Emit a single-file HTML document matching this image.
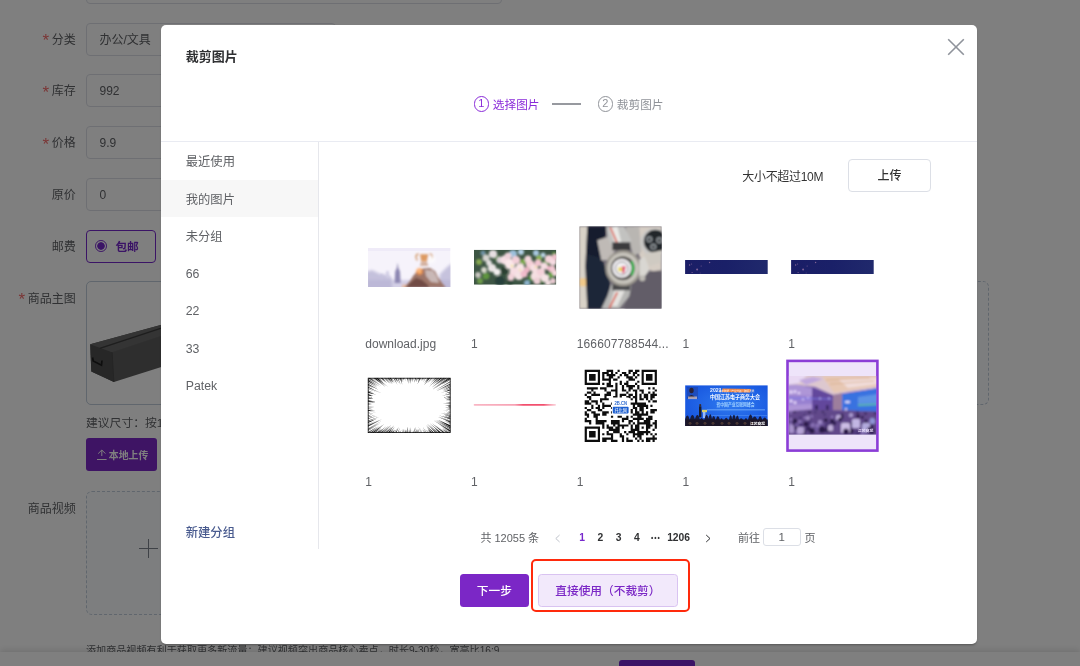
<!DOCTYPE html>
<html lang="zh-CN">
<head>
<meta charset="utf-8">
<title>裁剪图片</title>
<style>
*{box-sizing:border-box;margin:0;padding:0}
html,body{width:1080px;height:666px;overflow:hidden;background:#fff}
body{position:relative;font-family:"Liberation Sans","Noto Sans CJK SC",sans-serif;font-size:12px;color:#606266}
.abs{position:absolute}
/* ---------- underlying page ---------- */
#page{position:absolute;left:0;top:0;width:1080px;height:666px;will-change:transform}
.lbl{position:absolute;left:0;width:75.8px;text-align:right;height:33px;line-height:34.6px;font-size:12px;color:#606266;white-space:nowrap}
.lbl i{font-style:normal;color:#f56c6c;margin-right:2.6px;font-size:17px;line-height:10px;display:inline-block;position:relative;top:2.6px}
.inp{position:absolute;left:86px;width:250px;height:33px;border:1px solid #dcdfe6;border-radius:4px;line-height:33.6px;padding-left:12.5px;color:#606266;font-size:12px;background:#fff;overflow:hidden}
.radio{position:absolute;left:86px;top:230px;width:70px;height:33px;border:1px solid #7728cc;border-radius:4px;color:#7728cc;font-weight:bold;line-height:31.2px;padding-left:28.4px;font-size:11.7px}
.radio:before{content:"";position:absolute;left:8px;top:9.2px;width:9.8px;height:9.8px;border-radius:50%;border:1px solid #7728cc;background:radial-gradient(circle,#7728cc 0,#7728cc 3.4px,#fff 4.1px)}
.mainimg{position:absolute;left:86px;top:281px;width:903px;height:124px;border:1px dashed #c0ccda;border-radius:6px;background:#fbfdff}
.mainimg .pic{position:absolute;left:-1px;top:-1px;width:124px;height:124px;border:1px solid #c0ccda;border-radius:5px;background:#fff;overflow:hidden}
.tip{position:absolute;left:86px;white-space:nowrap;color:#606266;font-size:11.8px}
.pbtn{position:absolute;background:#7728cc;color:#fff;border-radius:3px;font-weight:500;font-size:11px;text-align:center;white-space:nowrap}
.video{position:absolute;left:86px;top:491px;width:124px;height:124px;border:1px dashed #c0ccda;border-radius:6px;background:#fbfdff}
.video:before{content:"";position:absolute;left:52.2px;top:56px;width:18.4px;height:1.3px;background:#7e858f}
.video:after{content:"";position:absolute;left:60.8px;top:47.4px;width:1.3px;height:18.4px;background:#7e858f}
#bar{position:absolute;left:0;top:652px;width:1080px;height:14px;background:#fff;box-shadow:0 -2px 6px rgba(0,0,0,.12)}
#mask{position:absolute;left:0;top:0;width:1080px;height:666px;background:rgba(0,0,0,.5)}
/* ---------- modal ---------- */
#modal{will-change:transform;position:absolute;left:161px;top:25px;width:816px;height:619.4px;background:#fff;border-radius:5px;box-shadow:0 2px 2.5px -1px rgba(0,0,0,.35);color:#606266}
#mi{position:absolute;left:-.25px;top:.5px;width:816px;height:619px}
#modal .title{position:absolute;left:25px;top:21px;font-size:13px;font-weight:bold;color:#303133;line-height:20px}
#modal .hr{position:absolute;left:0;top:115.5px;width:816px;height:1px;background:#e9ebf2}
#modal .vr{position:absolute;left:157px;top:116px;width:1px;height:407px;background:#e6e7ec}
.close{position:absolute;left:786px;top:12.4px}
.step{position:absolute;top:68px;height:20px;line-height:22.4px;font-size:11.7px;white-space:nowrap}
.num{position:absolute;width:15.4px;height:15.4px;border-radius:50%;border:1.2px solid;font-size:11px;line-height:13.2px;text-align:center}
.side{position:absolute;left:0;width:157px;height:37.5px;line-height:39.5px;padding-left:25px;font-size:12.3px;color:#606266;white-space:nowrap}
.side.on{background:#f7f7f7}
.cap{position:absolute;font-size:12px;color:#606266;white-space:nowrap;line-height:16px}
.pg{position:absolute;top:502.2px;height:18px;line-height:20px;font-size:11px;white-space:nowrap;color:#606266}
.pn{position:absolute;top:502.2px;width:24px;height:18px;line-height:19.4px;text-align:center;font-size:10.3px;font-weight:bold;color:#303133;white-space:nowrap}
</style>
</head>
<body>
<div id="page">
  <div class="inp" style="top:-29.3px;width:416px"></div>

  <div class="lbl" style="top:22.5px"><i>*</i>分类</div>
  <div class="inp" style="top:22.5px">办公/文具</div>
  <div class="lbl" style="top:74.3px"><i>*</i>库存</div>
  <div class="inp" style="top:74.3px">992</div>
  <div class="lbl" style="top:126.2px"><i>*</i>价格</div>
  <div class="inp" style="top:126.2px">9.9</div>
  <div class="lbl" style="top:177.8px">原价</div>
  <div class="inp" style="top:177.8px">0</div>
  <div class="lbl" style="top:230px">邮费</div>
  <div class="radio">包邮</div>

  <div class="lbl" style="top:281.5px"><i>*</i>商品主图</div>
  <div class="mainimg">
    <div class="pic">
      <svg width="124" height="124" viewBox="86 281 124 124" style="position:absolute;left:-1px;top:-1px">
        <defs><filter id="pb" x="-10%" y="-10%" width="120%" height="120%"><feGaussianBlur stdDeviation="0.5"/></filter></defs>
        <g filter="url(#pb)">
        <polygon points="90.2,344.3 160.6,325 215,312 215,350 113.9,382 91.3,371.4" fill="#5d5d5d"/>
        <polygon points="90.2,344.3 112.2,352.2 113.9,382 91.3,371.4" fill="#4f4f4f"/>
        <polygon points="90.2,344.3 160.6,325 215,312 215,318 112.2,352.2" fill="#686868"/>
        <path d="M99.8 348.4 L160.6 328.4 L215 312" stroke="#3c3c3c" stroke-width="1.3" fill="none"/>
        <path d="M112.2 352.2 L113.9 382" stroke="#474747" stroke-width=".8" fill="none"/>
        <path d="M92.6 357.5 L93.2 361 L101.5 365.2 L102 360.5" stroke="#1c1c1c" stroke-width="1.7" fill="none"/>
        </g>
      </svg>
    </div>
  </div>
  <div class="tip" style="top:413.7px;line-height:18px">建议尺寸：按1:1的比例上传，800*800以上</div>
  <div class="pbtn" style="left:86px;top:438px;width:71.2px;height:33px;line-height:36.4px;font-size:9.9px;font-weight:bold;background:#7c28c8;text-align:left;padding-left:22.8px"><svg width="12" height="12" viewBox="0 0 12 12" style="position:absolute;left:9.6px;top:11px"><path d="M1 10.5 H10.6 M5.8 7 V1.2 M2.2 4.6 L5.8 1 L9.4 4.6" stroke="#fff" stroke-width="1" fill="none"/></svg>本地上传</div>

  <div class="lbl" style="top:491.5px">商品视频</div>
  <div class="video"></div>
  <div class="tip" style="top:643.6px;line-height:14px;font-size:10.1px">添加商品视频有利于获取更多新流量；建议视频突出商品核心卖点，时长9-30秒，宽高比16:9</div>

  <div id="bar"></div>
  <div class="pbtn" style="left:619px;top:660px;width:76px;height:33px;line-height:33px;font-size:12px">保存</div>
</div>
<div id="mask"></div>

<div id="modal">
<div id="mi">
  <div class="title">裁剪图片</div>
  <svg class="close" width="18" height="18" viewBox="0 0 18 18"><path d="M1.2 1.2 L16.8 16.8 M16.8 1.2 L1.2 16.8" stroke="#8f939b" stroke-width="1.6" fill="none"/></svg>

  <!-- steps -->
  <div class="num" style="left:312.8px;top:70.8px;color:#8a2bd9;border-color:#8a2bd9">1</div>
  <div class="step" style="left:332px;color:#8a2bd9">选择图片</div>
  <div class="abs" style="left:391.2px;top:77.5px;width:29.3px;height:1.5px;background:#97999f"></div>
  <div class="num" style="left:436.8px;top:70.8px;color:#909399;border-color:#909399">2</div>
  <div class="step" style="left:456px;color:#909399">裁剪图片</div>

  <div class="hr"></div>
  <div class="vr"></div>

  <!-- sidebar -->
  <div class="side" style="top:117.9px">最近使用</div>
  <div class="side on" style="top:154.4px;line-height:41px">我的图片</div>
  <div class="side" style="top:192.9px">未分组</div>
  <div class="side" style="top:229.4px">66</div>
  <div class="side" style="top:266.9px">22</div>
  <div class="side" style="top:304.4px">33</div>
  <div class="side" style="top:341.9px">Patek</div>
  <div class="side" style="top:488.4px;color:#485a8e;font-weight:500">新建分组</div>

  <!-- upload bar -->
  <div class="cap" style="left:581.5px;top:143.2px;color:#333;letter-spacing:-.3px">大小不超过10M</div>
  <div class="abs" style="left:687.3px;top:133.7px;width:83px;height:33px;border:1px solid #dcdfe6;border-radius:4px;text-align:center;line-height:32.5px;font-weight:500;color:#333;font-size:12px">上传</div>

  <!-- grid placeholder -->
<svg id="grid" width="816" height="619" viewBox="161 25 816 619" style="position:absolute;left:.25px;top:-.5px;font-family:'Liberation Sans','Noto Sans CJK SC',sans-serif">
<defs>
<filter id="b1" x="-20%" y="-20%" width="140%" height="140%"><feGaussianBlur stdDeviation="0.9"/></filter>
<filter id="b2" x="-20%" y="-20%" width="140%" height="140%"><feGaussianBlur stdDeviation="1.6"/></filter>
<filter id="b05" x="-20%" y="-20%" width="140%" height="140%"><feGaussianBlur stdDeviation="0.45"/></filter>
<linearGradient id="g1" x1="0" y1="0" x2="0" y2="1"><stop offset="0" stop-color="#efe9f8"/><stop offset=".45" stop-color="#f8f5fc"/><stop offset=".75" stop-color="#d9d4ea"/><stop offset="1" stop-color="#b4b0d2"/></linearGradient>
<radialGradient id="glow"><stop offset="0" stop-color="#ffd9a0"/><stop offset=".4" stop-color="#ff9a4a" stop-opacity=".9"/><stop offset="1" stop-color="#ff9a4a" stop-opacity="0"/></radialGradient>
<radialGradient id="wglow"><stop offset="0" stop-color="#fff"/><stop offset="1" stop-color="#fff" stop-opacity="0"/></radialGradient>
<linearGradient id="navy" x1="0" y1="0" x2="1" y2="0"><stop offset="0" stop-color="#1b1e66"/><stop offset=".5" stop-color="#1a2068"/><stop offset="1" stop-color="#20296c"/></linearGradient>
<linearGradient id="redl" x1="0" y1="0" x2="1" y2="0"><stop offset="0" stop-color="#f9b6c4"/><stop offset=".5" stop-color="#f7a2b4"/><stop offset=".6" stop-color="#f2506e"/><stop offset=".85" stop-color="#f2506e"/><stop offset="1" stop-color="#f9b6c4" stop-opacity=".6"/></linearGradient>
<radialGradient id="blu" cx=".55" cy=".45" r=".7"><stop offset="0" stop-color="#2f7bf0"/><stop offset="1" stop-color="#1450dc"/></radialGradient>
<clipPath id="c1"><rect x="368" y="248" width="82.5" height="39"/></clipPath>
<clipPath id="c2"><rect x="474" y="249.7" width="82.3" height="35"/></clipPath>
<clipPath id="c3"><rect x="579.3" y="226.3" width="82.4" height="82.5"/></clipPath>
<clipPath id="c9"><rect x="685.1" y="385.2" width="82.7" height="40.8"/></clipPath>
<clipPath id="c10"><rect x="788.9" y="376" width="87.3" height="58.6"/></clipPath>
</defs>
<g clip-path="url(#c1)">
<rect x="368" y="248" width="82.5" height="39" fill="#f6f3fb"/>
<rect x="368" y="248" width="82.5" height="3" fill="#eee9f7" opacity=".8"/>
<g filter="url(#b2)">
<rect x="366" y="280" width="86" height="10" fill="#d3cfe6"/>
<path d="M366 272 L372 270 L380 274 L388 275 L392 278 L392 290 L366 290Z" fill="#b4b0d2" opacity=".75"/>
<path d="M440 274 L446 268 L452 263 L452 290 L438 290Z" fill="#b6b2d3" opacity=".75"/>
</g>
<g filter="url(#b1)">
<path d="M397.6 262.5 L398.4 268 L400 271.5 L400.6 283 L394.6 283 L395.2 271.5 L396.8 268Z" fill="#8d87b2"/>
<rect x="386.2" y="271" width="2.6" height="7" fill="#cfcbe4"/>
<rect x="380.5" y="274" width="2" height="5" fill="#c6c2de"/>
<path d="M404 287.5 L410 281 L413 276 L417 271.5 L423 268.5 L430 268 L435 271 L438 277 L442 283 L446 287.5Z" fill="#9c7468"/>
<path d="M406 287.5 L411 282 L416 278 L422 280 L428 285 L429 287.5Z" fill="#714c44"/>
<path d="M425 270 L433 270.5 L437 277 L439 283 L431 282 L426 276Z" fill="#c9b8b6"/>
<path d="M417.3 260.5 q-3.2 -5.5 1.2 -6.6 M431 260.5 q3.2 -5.5 -1.2 -6.6" stroke="#c98548" stroke-width="1.2" fill="none"/>
<path d="M420 254.3 L428.4 254.3 L427.2 261.5 L421.2 261.5Z" fill="#dd9a62"/>
<path d="M421 262 L427 262 L428.5 266 L420 266Z" fill="#caa08a" opacity=".8"/>
<circle cx="431.5" cy="259.5" r="5.5" fill="url(#wglow)"/>
<circle cx="419.5" cy="271.5" r="4.6" fill="url(#glow)"/>
<circle cx="404" cy="286.5" r="3" fill="url(#glow)" opacity=".5"/>
</g></g>
<g clip-path="url(#c2)">
<rect x="474" y="249.7" width="82.3" height="35" fill="#3d5544"/>
<g filter="url(#b1)">
<circle cx="513" cy="254" r="4" fill="#9cc0dc"/>
<circle cx="521" cy="252" r="3" fill="#b5d2e8"/>
<circle cx="536" cy="253" r="3" fill="#a9c9e2"/>
<circle cx="543" cy="255" r="2.5" fill="#b9d4e6"/>
<circle cx="483" cy="253" r="2.5" fill="#6f93a6"/>
<circle cx="527" cy="283" r="3" fill="#8cb2cc"/>
<circle cx="479" cy="262" r="3" fill="#86a850"/>
<circle cx="486" cy="276" r="3.5" fill="#5f9440"/>
<circle cx="480" cy="281" r="3" fill="#6c9a48"/>
<circle cx="497" cy="258" r="3" fill="#4c7a3c"/>
<circle cx="523" cy="262" r="3" fill="#7aa84a"/>
<circle cx="528" cy="268" r="2.5" fill="#5d943c"/>
<circle cx="539" cy="258" r="3" fill="#8ab052"/>
<circle cx="546" cy="263" r="3.5" fill="#4f8a38"/>
<circle cx="551" cy="275" r="3" fill="#65a040"/>
<circle cx="531" cy="278" r="3" fill="#4e8a3a"/>
<circle cx="542" cy="281" r="2.5" fill="#3d7030"/>
<circle cx="554" cy="254" r="2" fill="#6aa244"/>
<circle cx="504" cy="271" r="3.5" fill="#2a4032"/>
<circle cx="500" cy="281" r="5" fill="#28403a"/>
<circle cx="510" cy="282" r="3" fill="#2c4434"/>
<circle cx="493" cy="254" r="4.1" fill="#e7dfe2"/>
<circle cx="500" cy="260" r="3.5" fill="#d9d0d4"/>
<circle cx="492" cy="268" r="4.1" fill="#ece6e6"/>
<circle cx="497" cy="272" r="3.5" fill="#f2eeee"/>
<circle cx="484" cy="270" r="2.9" fill="#d8d8cc"/>
<circle cx="478" cy="275" r="2.9" fill="#c9c6c0"/>
<circle cx="505" cy="260" r="4.7" fill="#f6dfe4"/>
<circle cx="510" cy="264" r="5.3" fill="#fbe8ea"/>
<circle cx="516" cy="260" r="4.1" fill="#f3cfd8"/>
<circle cx="520" cy="268" r="4.7" fill="#f9e4e6"/>
<circle cx="514" cy="272" r="4.7" fill="#f7dde2"/>
<circle cx="519" cy="276" r="4.1" fill="#f5e3e4"/>
<circle cx="511" cy="277" r="3.5" fill="#f3d3da"/>
<circle cx="524" cy="274" r="3.5" fill="#f0bccb"/>
<circle cx="530" cy="264" r="4.1" fill="#f4cdd6"/>
<circle cx="534" cy="268" r="4.1" fill="#f8dfe2"/>
<circle cx="538" cy="263" r="3.5" fill="#f1c4d0"/>
<circle cx="527" cy="270" r="2.9" fill="#eeb6c6"/>
<circle cx="536" cy="276" r="5.3" fill="#f5dfe2"/>
<circle cx="541" cy="272" r="4.1" fill="#f3d1d9"/>
<circle cx="545" cy="278" r="4.1" fill="#f6e4e6"/>
<circle cx="537" cy="281" r="3.5" fill="#eecfd6"/>
<circle cx="549" cy="259" r="4.1" fill="#f4d3da"/>
<circle cx="553" cy="262" r="3.5" fill="#f7dce2"/>
<circle cx="555" cy="257" r="2.9" fill="#f0c0cc"/>
<circle cx="552" cy="269" r="3.5" fill="#f2c7d2"/>
<circle cx="555" cy="273" r="2.9" fill="#f6d9df"/>
<circle cx="548" cy="268" r="2.4" fill="#efb3c5"/>
<circle cx="553" cy="281" r="2.9" fill="#eacbd2"/>
<circle cx="486" cy="258" r="3.5" fill="#d5d3cf"/>
<circle cx="489" cy="263" r="2.9" fill="#e3dfe0"/>
<circle cx="544" cy="266" r="3.5" fill="#f6dde2"/>
<circle cx="528" cy="259" r="3.5" fill="#f3d6dc"/>
<circle cx="508" cy="256" r="3.5" fill="#efd3da"/>
<circle cx="548" cy="283" r="2.9" fill="#f1dde0"/>
<circle cx="512" cy="266" r="1.2" fill="#f2e48c"/>
<circle cx="536" cy="267" r="1.1" fill="#efe08a"/>
<circle cx="520" cy="270" r="1.0" fill="#f0e090"/>
</g></g>
<g clip-path="url(#c3)">
<rect x="579.3" y="226.3" width="82.4" height="82.5" fill="#6d6872"/>
<g filter="url(#b1)">
<polygon points="634.3,226.3 661.7,226.3 661.7,273.3 649.3,270.3 639.3,256.3" fill="#d6cdc4"/>
<polygon points="634.3,273.3 661.7,270.3 661.7,308.8 624.3,308.8" fill="#625d68"/>
<rect x="579.3" y="226.3" width="9" height="82.5" fill="#d9d3c8"/>
<rect x="579.3" y="278.3" width="7" height="8" fill="#f0c98a"/>
<polygon points="587.3,226.3 606.3,226.3 605.3,238.3 598.3,244.3 603.3,264.3 610.3,286.3 604.3,308.8 587.3,308.8 585.3,266.3" fill="#171d2d"/>
<polygon points="587.3,254.3 601.3,258.3 609.3,276.3 610.3,292.3 603.3,308.8 587.3,308.8" fill="#1f2739"/>
<polygon points="597.3,240.3 609.3,236.3 615.3,250.3 609.3,260.3 601.3,260.3" fill="#bfbab6"/>
<polygon points="625.3,226.3 639.3,226.3 641.3,252.3 633.3,256.3 629.3,242.3" fill="#b9b6b2"/>
<polygon points="606.3,226.3 624.3,226.3 631.3,240.3 629.3,250.3 613.3,250.3 607.3,236.3" fill="#c2c2c0"/>
<polygon points="609.3,228.3 617.3,226.3 621.3,242.3 615.3,244.3" fill="#e9e9e6"/>
<path d="M610.3 227.3 L617.3 243.3" stroke="#d84a38" stroke-width="1.5"/>
<polygon points="611.3,284.3 631.3,286.3 629.3,296.3 619.3,308.8 601.3,308.8 607.3,296.3" fill="#b7b7b5"/>
<polygon points="615.3,288.3 625.3,289.3 617.3,306.3 609.3,306.3" fill="#e4e3e0"/>
<path d="M617.3 292.3 L609.3 308.3" stroke="#d84a38" stroke-width="1.5"/>
<rect x="612.3" y="242.3" width="18" height="8" fill="#3a3a3c"/>
<rect x="612.3" y="284.3" width="18" height="6" fill="#4a4a4c"/>
<circle cx="623.3" cy="268.3" r="18" fill="#9c988f"/>
<circle cx="623.3" cy="268.3" r="15.5" fill="#c9c6be"/>
<circle cx="622.8" cy="268.3" r="12" fill="#55524f"/>
<circle cx="621.8" cy="268.3" r="9.5" fill="#f3f1f4"/>
<path d="M631.5999999999999 261.3 q3.2 7 0 14" stroke="#22c24a" stroke-width="2.2" fill="none"/>
<circle cx="621.8" cy="268.3" r="6.5" fill="none" stroke="#555" stroke-width=".7"/>
<rect x="618.3" y="267.3" width="3.5" height="4" fill="#e8d44a"/>
<path d="M621.8 266.3 l4 0 l-1.5 7 l-2 0Z" fill="#e25a7a"/>
<polygon points="639.3,259.3 645.3,256.3 649.3,270.3 643.3,278.3 639.3,276.3" fill="#d9d7d2"/>
<circle cx="642.3" cy="278.3" r="3" fill="#bdbab4"/>
<circle cx="654.3" cy="242.3" r="14" fill="#c9c8c6"/>
<circle cx="655.3" cy="241.3" r="11.5" fill="#23272c"/>
<circle cx="649.3" cy="239.3" r="3" fill="#9aa0a4"/><circle cx="649.3" cy="239.3" r="1.6" fill="#1a1d20"/>
<circle cx="653.3" cy="246.8" r="3" fill="#9aa0a4"/><circle cx="653.3" cy="246.8" r="1.6" fill="#1a1d20"/>
<circle cx="659.3" cy="240.3" r="3" fill="#9aa0a4"/><circle cx="659.3" cy="240.3" r="1.6" fill="#1a1d20"/>
<polygon points="643.3,254.3 661.7,250.3 661.7,262.3 649.3,266.3" fill="#cfcac2"/>
</g></g>
<rect x="685.1" y="260" width="82.6" height="14" fill="url(#navy)"/>
<circle cx="689.6" cy="265" r="0.7" fill="#a17aa6" opacity=".75"/>
<circle cx="691.6" cy="264" r="0.5" fill="#a17aa6" opacity=".75"/>
<circle cx="697.1" cy="269.5" r="1" fill="#a17aa6" opacity=".75"/>
<circle cx="692.1" cy="272.5" r="0.6" fill="#a17aa6" opacity=".75"/>
<circle cx="701.1" cy="266" r="0.5" fill="#a17aa6" opacity=".75"/>
<circle cx="709.6" cy="262.5" r="0.7" fill="#a17aa6" opacity=".75"/>
<circle cx="700.1" cy="273" r="0.4" fill="#a17aa6" opacity=".75"/>
<rect x="791.1" y="260" width="82.6" height="14" fill="url(#navy)"/>
<circle cx="795.6" cy="265" r="0.7" fill="#a17aa6" opacity=".75"/>
<circle cx="797.6" cy="264" r="0.5" fill="#a17aa6" opacity=".75"/>
<circle cx="803.1" cy="269.5" r="1" fill="#a17aa6" opacity=".75"/>
<circle cx="798.1" cy="272.5" r="0.6" fill="#a17aa6" opacity=".75"/>
<circle cx="807.1" cy="266" r="0.5" fill="#a17aa6" opacity=".75"/>
<circle cx="815.6" cy="262.5" r="0.7" fill="#a17aa6" opacity=".75"/>
<circle cx="806.1" cy="273" r="0.4" fill="#a17aa6" opacity=".75"/>
<g><rect x="367.8" y="377.8" width="82.8" height="55.2" fill="#fff"/>
<clipPath id="c6"><rect x="367.8" y="377.8" width="82.8" height="55.2"/></clipPath>
<path clip-path="url(#c6)" d="M368.0 378.1L376.4 383.3L368.4 377.5ZM369.1 378.0L381.5 386.3L369.3 377.6ZM370.4 377.9L381.9 385.9L370.6 377.7ZM372.2 377.9L378.4 382.4L372.3 377.7ZM373.5 377.9L386.6 387.9L373.7 377.7ZM374.3 378.2L385.2 386.3L374.9 377.4ZM376.1 378.2L384.2 384.4L376.7 377.4ZM376.9 378.0L388.4 387.5L377.2 377.6ZM378.3 378.0L383.5 382.3L378.6 377.6ZM380.4 378.0L385.5 382.5L380.8 377.6ZM381.5 378.0L387.5 383.6L381.9 377.6ZM382.2 377.9L386.0 381.6L382.5 377.7ZM384.2 378.0L389.7 383.7L384.6 377.6ZM385.4 378.0L390.6 383.7L385.8 377.6ZM387.0 377.9L392.9 384.9L387.3 377.7ZM387.8 378.1L392.8 383.8L388.6 377.5ZM389.3 378.1L392.9 382.3L390.1 377.5ZM389.9 378.0L393.8 383.0L390.6 377.6ZM391.5 377.9L395.1 383.2L391.8 377.7ZM393.3 378.0L397.3 384.4L393.9 377.6ZM394.8 378.0L397.3 382.0L395.5 377.6ZM395.8 377.9L398.7 383.2L396.4 377.7ZM397.4 377.9L400.6 384.8L398.0 377.7ZM398.5 377.9L399.9 380.6L399.2 377.7ZM399.7 377.9L402.4 384.8L400.5 377.7ZM400.6 377.9L402.2 382.0L401.4 377.7ZM401.8 377.8L403.2 382.3L402.2 377.8ZM403.0 377.9L404.0 380.4L403.8 377.7ZM404.5 377.8L405.3 381.2L405.0 377.8ZM406.7 377.8L407.2 380.5L407.2 377.8ZM407.4 377.8L408.2 383.9L408.3 377.8ZM409.3 377.8L409.5 381.3L409.8 377.8ZM409.8 377.8L410.0 383.9L410.8 377.8ZM411.1 377.8L411.1 380.9L411.6 377.8ZM412.4 377.8L412.2 382.2L413.1 377.8ZM413.8 377.8L413.7 380.2L414.4 377.8ZM415.1 377.7L414.4 382.7L416.0 377.9ZM416.9 377.7L415.9 382.6L417.6 377.9ZM418.1 377.7L417.6 380.5L419.0 377.9ZM419.6 377.6L417.4 384.4L420.4 378.0ZM420.7 377.7L419.0 382.3L421.0 377.9ZM422.3 377.7L421.0 380.7L422.6 377.9ZM423.0 377.7L421.5 381.3L423.5 377.9ZM424.2 377.7L422.9 380.5L424.5 377.9ZM425.6 377.7L422.9 382.5L425.9 377.9ZM427.8 377.7L423.7 384.0L428.1 377.9ZM428.3 377.7L425.2 382.6L428.8 377.9ZM429.3 377.5L423.9 385.6L430.1 378.1ZM431.3 377.7L426.7 383.7L431.6 377.9ZM432.2 377.7L428.0 383.0L432.5 377.9ZM434.4 377.7L430.6 382.1L434.6 377.9ZM435.8 377.7L429.4 384.5L436.1 377.9ZM436.6 377.6L433.2 381.4L437.0 378.0ZM438.4 377.5L428.7 387.1L438.9 378.1ZM439.0 377.7L432.5 383.9L439.2 377.9ZM440.7 377.5L432.4 385.2L441.3 378.1ZM441.5 377.5L435.5 383.2L442.1 378.1ZM443.6 377.5L431.2 387.9L444.1 378.1ZM444.9 377.6L432.7 387.3L445.1 378.0ZM445.9 377.7L437.0 384.5L446.0 377.9ZM446.6 377.6L438.2 384.0L446.8 378.0ZM448.6 377.6L431.9 389.5L449.0 378.0ZM450.1 377.4L432.1 390.1L450.7 378.2ZM450.5 378.1L441.5 384.2L450.7 378.4ZM450.4 379.0L441.9 384.8L450.8 379.6ZM450.4 381.2L435.4 390.3L450.8 381.8ZM450.5 382.4L436.3 390.4L450.7 382.6ZM450.4 383.5L435.7 391.6L450.8 384.2ZM450.5 385.1L440.6 390.1L450.7 385.4ZM450.4 386.2L442.4 390.4L450.8 387.0ZM450.5 387.9L442.2 391.6L450.7 388.4ZM450.5 389.3L439.8 393.6L450.7 389.6ZM450.4 389.3L444.8 392.0L450.8 390.2ZM450.5 391.5L445.2 393.6L450.7 392.3ZM450.5 393.2L441.8 396.0L450.7 393.7ZM450.6 394.1L445.8 395.5L450.6 394.3ZM450.5 395.7L442.6 397.8L450.7 396.3ZM450.5 396.9L444.4 398.5L450.7 397.7ZM450.6 398.3L446.0 399.3L450.6 398.7ZM450.5 398.8L445.9 399.9L450.7 399.5ZM450.6 400.3L445.0 401.1L450.6 400.6ZM450.6 402.2L445.6 402.9L450.6 402.8ZM450.6 403.2L442.6 403.8L450.6 403.7ZM450.6 404.8L444.9 405.2L450.6 405.5ZM450.6 405.7L447.6 406.0L450.6 406.3ZM450.6 406.5L447.6 406.8L450.6 407.4ZM450.6 407.8L445.0 407.8L450.6 408.6ZM450.6 409.7L445.6 409.4L450.6 410.3ZM450.6 411.2L442.7 410.2L450.6 411.5ZM450.6 412.4L445.7 411.8L450.6 412.9ZM450.7 413.9L443.7 412.7L450.5 414.5ZM450.7 415.2L440.6 413.1L450.5 415.8ZM450.7 416.3L443.1 414.6L450.5 416.9ZM450.7 417.7L443.1 415.8L450.5 418.4ZM450.7 418.7L438.9 415.2L450.5 419.5ZM450.7 420.7L438.1 416.2L450.5 421.1ZM450.8 421.4L437.7 416.7L450.4 422.2ZM450.7 422.4L444.7 420.2L450.5 422.9ZM450.7 423.8L443.3 420.6L450.5 424.0ZM450.8 425.5L437.4 419.4L450.4 426.3ZM450.8 426.3L437.8 420.1L450.4 426.9ZM450.8 427.5L435.5 419.7L450.4 428.3ZM450.7 429.1L434.2 419.8L450.5 429.6ZM450.8 430.6L433.0 420.1L450.4 431.3ZM450.8 431.6L439.2 424.6L450.4 432.1ZM450.3 432.8L441.5 427.1L450.1 433.2ZM448.6 432.7L442.2 428.6L448.2 433.3ZM447.6 432.8L441.5 428.7L447.3 433.2ZM446.0 432.9L435.4 425.1L445.8 433.1ZM444.5 432.6L431.9 423.3L443.9 433.4ZM444.0 432.9L436.5 427.1L443.8 433.1ZM441.9 432.9L435.1 427.3L441.7 433.1ZM441.2 432.7L429.4 423.0L440.6 433.3ZM440.1 432.7L434.6 428.3L439.5 433.3ZM438.2 432.9L429.6 424.8L438.0 433.1ZM437.6 432.8L429.3 425.0L437.2 433.2ZM436.3 432.7L427.0 423.6L435.8 433.3ZM434.2 432.7L430.5 429.2L433.5 433.3ZM433.7 432.8L426.0 424.6L433.2 433.2ZM432.2 432.7L426.6 426.6L431.4 433.3ZM430.8 432.8L427.6 429.2L430.3 433.2ZM429.4 432.9L426.7 429.4L429.1 433.1ZM428.4 432.9L425.4 429.0L428.0 433.1ZM426.8 432.9L422.3 426.2L426.4 433.1ZM425.3 432.9L422.9 429.3L424.8 433.1ZM424.4 432.9L422.1 429.0L424.2 433.1ZM422.3 432.9L419.7 427.7L422.0 433.1ZM421.3 432.9L418.1 426.0L421.0 433.1ZM419.7 432.9L417.7 428.5L419.1 433.1ZM418.4 432.9L416.7 428.7L417.8 433.1ZM417.2 432.9L415.0 426.2L416.7 433.1ZM415.8 432.9L414.2 427.5L415.1 433.1ZM414.8 433.0L413.9 429.1L414.5 433.0ZM414.0 432.9L413.2 430.3L413.3 433.1ZM412.3 433.0L411.9 430.0L412.0 433.0ZM410.6 433.0L410.0 427.0L409.8 433.0ZM409.8 433.0L409.5 429.7L409.3 433.0ZM408.3 433.0L408.1 430.0L407.7 433.0ZM407.4 433.0L407.5 426.5L406.4 433.0ZM405.7 433.1L405.8 429.6L404.8 432.9ZM404.4 433.0L404.9 429.1L404.1 433.0ZM403.1 433.1L403.9 428.5L402.5 432.9ZM401.9 433.0L403.0 428.3L401.6 433.0ZM400.6 433.1L401.3 430.1L400.1 432.9ZM399.5 433.1L400.2 430.4L399.1 432.9ZM398.0 433.1L400.0 427.7L397.5 432.9ZM396.2 433.2L398.7 427.1L395.5 432.8ZM394.6 433.1L396.9 428.3L394.1 432.9ZM393.3 433.2L395.0 429.4L392.6 432.8ZM392.4 433.2L393.9 429.9L391.6 432.8ZM390.7 433.2L394.7 426.7L390.1 432.8ZM389.4 433.2L391.9 429.2L388.9 432.8ZM388.6 433.3L394.1 425.2L387.9 432.7ZM386.9 433.3L391.9 426.4L386.2 432.7ZM385.5 433.1L391.7 425.6L385.2 432.9ZM385.0 433.2L388.4 428.9L384.7 432.8ZM383.7 433.2L391.4 424.5L383.2 432.8ZM381.8 433.3L389.0 425.5L381.2 432.7ZM380.7 433.3L384.1 429.4L380.1 432.7ZM379.0 433.2L386.5 426.0L378.5 432.8ZM377.8 433.3L382.3 428.8L377.3 432.7ZM376.8 433.2L381.8 428.7L376.6 432.8ZM375.1 433.3L381.5 427.6L374.6 432.7ZM373.4 433.2L383.2 425.3L373.1 432.8ZM372.7 433.3L384.7 423.8L372.2 432.7ZM371.1 433.1L383.6 423.9L370.9 432.9ZM370.5 433.3L379.0 426.8L370.0 432.7ZM368.8 433.1L381.7 424.2L368.7 432.9ZM368.0 433.2L377.6 426.4L367.6 432.6ZM367.9 431.1L381.7 422.3L367.7 430.7ZM368.0 430.0L379.0 423.2L367.6 429.5ZM367.9 429.1L383.4 420.0L367.7 428.7ZM367.9 426.7L382.8 418.9L367.7 426.5ZM368.0 426.3L381.4 419.2L367.6 425.4ZM367.9 424.8L375.5 421.0L367.7 424.4ZM367.9 423.0L374.5 419.9L367.7 422.4ZM368.0 422.8L377.2 418.5L367.6 421.9ZM367.9 421.3L379.3 416.7L367.7 420.7ZM367.9 419.0L377.5 415.7L367.7 418.6ZM367.8 417.6L375.4 415.3L367.8 417.4ZM367.9 417.5L375.4 415.1L367.7 416.9ZM367.9 415.8L372.5 414.4L367.7 415.3ZM367.8 414.3L376.9 412.3L367.8 414.1ZM367.8 412.6L376.3 411.0L367.8 412.2ZM367.9 411.3L375.2 409.9L367.7 410.4ZM367.8 410.6L373.1 409.7L367.8 410.0ZM367.8 408.4L374.1 407.7L367.8 407.9ZM367.8 407.7L372.3 407.3L367.8 407.4ZM367.8 406.8L375.3 406.4L367.8 406.4ZM367.8 404.5L372.1 404.4L367.8 404.1ZM367.8 403.7L371.8 403.7L367.8 403.2ZM367.8 402.1L375.9 402.4L367.8 401.2ZM367.7 401.2L376.2 401.7L367.9 400.2ZM367.8 399.6L375.3 400.6L367.8 399.4ZM367.7 398.4L374.0 399.1L367.9 397.6ZM367.8 396.9L373.2 397.9L367.8 396.6ZM367.7 395.4L372.4 396.3L367.9 394.8ZM367.7 394.9L373.7 396.0L367.9 394.1ZM367.7 392.8L373.9 394.3L367.9 392.1ZM367.7 392.2L376.4 394.7L367.9 391.6ZM367.7 390.9L373.5 392.8L367.9 390.6ZM367.7 388.7L377.0 392.3L367.9 388.4ZM367.7 387.5L382.0 393.5L367.9 387.0ZM367.7 387.0L374.7 389.9L367.9 386.7ZM367.7 385.5L374.0 388.3L367.9 385.1ZM367.6 384.5L379.1 389.9L368.0 383.7ZM367.7 382.4L378.1 387.9L367.9 381.9ZM367.7 381.3L378.0 387.1L367.9 380.9ZM367.5 380.8L377.1 386.0L368.1 379.9ZM367.6 379.3L380.1 386.8L368.0 378.7Z" fill="#111"/>
<rect x="368.2" y="378.2" width="82.0" height="54.4" fill="none" stroke="#111" stroke-width=".8"/></g>
<rect x="473.7" y="404.1" width="82.3" height="1.7" rx=".8" fill="url(#redl)"/>
<path d="M584.70 369.70h15.32v2.19h-15.32zM606.58 369.70h6.56v2.19h-6.56zM617.52 369.70h2.19v2.19h-2.19zM628.46 369.70h4.38v2.19h-4.38zM635.02 369.70h4.38v2.19h-4.38zM641.58 369.70h15.32v2.19h-15.32zM584.70 371.89h2.19v2.19h-2.19zM597.83 371.89h2.19v2.19h-2.19zM602.20 371.89h6.56v2.19h-6.56zM610.95 371.89h2.19v2.19h-2.19zM615.33 371.89h2.19v2.19h-2.19zM621.89 371.89h4.38v2.19h-4.38zM628.46 371.89h2.19v2.19h-2.19zM632.83 371.89h4.38v2.19h-4.38zM641.58 371.89h2.19v2.19h-2.19zM654.71 371.89h2.19v2.19h-2.19zM584.70 374.08h2.19v2.19h-2.19zM589.08 374.08h6.56v2.19h-6.56zM597.83 374.08h2.19v2.19h-2.19zM602.20 374.08h2.19v2.19h-2.19zM606.58 374.08h8.75v2.19h-8.75zM619.71 374.08h2.19v2.19h-2.19zM624.08 374.08h4.38v2.19h-4.38zM632.83 374.08h2.19v2.19h-2.19zM637.21 374.08h2.19v2.19h-2.19zM641.58 374.08h2.19v2.19h-2.19zM645.96 374.08h6.56v2.19h-6.56zM654.71 374.08h2.19v2.19h-2.19zM584.70 376.26h2.19v2.19h-2.19zM589.08 376.26h6.56v2.19h-6.56zM597.83 376.26h2.19v2.19h-2.19zM602.20 376.26h2.19v2.19h-2.19zM608.77 376.26h4.38v2.19h-4.38zM617.52 376.26h2.19v2.19h-2.19zM626.27 376.26h6.56v2.19h-6.56zM635.02 376.26h2.19v2.19h-2.19zM641.58 376.26h2.19v2.19h-2.19zM645.96 376.26h6.56v2.19h-6.56zM654.71 376.26h2.19v2.19h-2.19zM584.70 378.45h2.19v2.19h-2.19zM589.08 378.45h6.56v2.19h-6.56zM597.83 378.45h2.19v2.19h-2.19zM602.20 378.45h8.75v2.19h-8.75zM613.14 378.45h4.38v2.19h-4.38zM628.46 378.45h6.56v2.19h-6.56zM641.58 378.45h2.19v2.19h-2.19zM645.96 378.45h6.56v2.19h-6.56zM654.71 378.45h2.19v2.19h-2.19zM584.70 380.64h2.19v2.19h-2.19zM597.83 380.64h2.19v2.19h-2.19zM608.77 380.64h2.19v2.19h-2.19zM619.71 380.64h2.19v2.19h-2.19zM626.27 380.64h2.19v2.19h-2.19zM637.21 380.64h2.19v2.19h-2.19zM641.58 380.64h2.19v2.19h-2.19zM654.71 380.64h2.19v2.19h-2.19zM584.70 382.83h15.32v2.19h-15.32zM602.20 382.83h2.19v2.19h-2.19zM606.58 382.83h4.38v2.19h-4.38zM615.33 382.83h2.19v2.19h-2.19zM619.71 382.83h2.19v2.19h-2.19zM624.08 382.83h4.38v2.19h-4.38zM635.02 382.83h2.19v2.19h-2.19zM641.58 382.83h15.32v2.19h-15.32zM606.58 385.02h6.56v2.19h-6.56zM615.33 385.02h2.19v2.19h-2.19zM621.89 385.02h2.19v2.19h-2.19zM626.27 385.02h8.75v2.19h-8.75zM637.21 385.02h2.19v2.19h-2.19zM586.89 387.20h10.94v2.19h-10.94zM600.02 387.20h6.56v2.19h-6.56zM615.33 387.20h2.19v2.19h-2.19zM621.89 387.20h2.19v2.19h-2.19zM628.46 387.20h4.38v2.19h-4.38zM637.21 387.20h2.19v2.19h-2.19zM648.15 387.20h2.19v2.19h-2.19zM652.52 387.20h2.19v2.19h-2.19zM591.26 389.39h2.19v2.19h-2.19zM604.39 389.39h2.19v2.19h-2.19zM610.95 389.39h6.56v2.19h-6.56zM621.89 389.39h4.38v2.19h-4.38zM628.46 389.39h2.19v2.19h-2.19zM632.83 389.39h4.38v2.19h-4.38zM639.40 389.39h4.38v2.19h-4.38zM654.71 389.39h2.19v2.19h-2.19zM586.89 391.58h4.38v2.19h-4.38zM593.45 391.58h2.19v2.19h-2.19zM606.58 391.58h4.38v2.19h-4.38zM615.33 391.58h2.19v2.19h-2.19zM626.27 391.58h2.19v2.19h-2.19zM635.02 391.58h2.19v2.19h-2.19zM641.58 391.58h2.19v2.19h-2.19zM648.15 391.58h2.19v2.19h-2.19zM652.52 391.58h2.19v2.19h-2.19zM584.70 393.77h2.19v2.19h-2.19zM591.26 393.77h8.75v2.19h-8.75zM604.39 393.77h6.56v2.19h-6.56zM615.33 393.77h2.19v2.19h-2.19zM619.71 393.77h6.56v2.19h-6.56zM628.46 393.77h4.38v2.19h-4.38zM635.02 393.77h2.19v2.19h-2.19zM639.40 393.77h2.19v2.19h-2.19zM643.77 393.77h4.38v2.19h-4.38zM650.34 393.77h6.56v2.19h-6.56zM586.89 395.95h4.38v2.19h-4.38zM604.39 395.95h2.19v2.19h-2.19zM613.14 395.95h4.38v2.19h-4.38zM619.71 395.95h2.19v2.19h-2.19zM626.27 395.95h4.38v2.19h-4.38zM632.83 395.95h4.38v2.19h-4.38zM639.40 395.95h2.19v2.19h-2.19zM643.77 395.95h4.38v2.19h-4.38zM650.34 395.95h4.38v2.19h-4.38zM589.08 398.14h2.19v2.19h-2.19zM600.02 398.14h8.75v2.19h-8.75zM630.65 398.14h2.19v2.19h-2.19zM635.02 398.14h2.19v2.19h-2.19zM639.40 398.14h4.38v2.19h-4.38zM645.96 398.14h2.19v2.19h-2.19zM650.34 398.14h2.19v2.19h-2.19zM584.70 400.33h4.38v2.19h-4.38zM591.26 400.33h6.56v2.19h-6.56zM600.02 400.33h2.19v2.19h-2.19zM635.02 400.33h2.19v2.19h-2.19zM648.15 400.33h2.19v2.19h-2.19zM652.52 400.33h4.38v2.19h-4.38zM584.70 402.52h6.56v2.19h-6.56zM595.64 402.52h2.19v2.19h-2.19zM602.20 402.52h2.19v2.19h-2.19zM610.95 402.52h2.19v2.19h-2.19zM630.65 402.52h15.32v2.19h-15.32zM591.26 404.71h2.19v2.19h-2.19zM597.83 404.71h2.19v2.19h-2.19zM602.20 404.71h8.75v2.19h-8.75zM632.83 404.71h2.19v2.19h-2.19zM637.21 404.71h10.94v2.19h-10.94zM650.34 404.71h2.19v2.19h-2.19zM584.70 406.89h2.19v2.19h-2.19zM591.26 406.89h2.19v2.19h-2.19zM595.64 406.89h4.38v2.19h-4.38zM602.20 406.89h2.19v2.19h-2.19zM610.95 406.89h2.19v2.19h-2.19zM632.83 406.89h4.38v2.19h-4.38zM639.40 406.89h4.38v2.19h-4.38zM645.96 406.89h2.19v2.19h-2.19zM586.89 409.08h4.38v2.19h-4.38zM597.83 409.08h4.38v2.19h-4.38zM630.65 409.08h2.19v2.19h-2.19zM635.02 409.08h2.19v2.19h-2.19zM639.40 409.08h4.38v2.19h-4.38zM650.34 409.08h6.56v2.19h-6.56zM584.70 411.27h2.19v2.19h-2.19zM591.26 411.27h4.38v2.19h-4.38zM602.20 411.27h6.56v2.19h-6.56zM610.95 411.27h2.19v2.19h-2.19zM630.65 411.27h2.19v2.19h-2.19zM635.02 411.27h4.38v2.19h-4.38zM641.58 411.27h2.19v2.19h-2.19zM645.96 411.27h2.19v2.19h-2.19zM650.34 411.27h4.38v2.19h-4.38zM584.70 413.46h4.38v2.19h-4.38zM593.45 413.46h6.56v2.19h-6.56zM602.20 413.46h4.38v2.19h-4.38zM632.83 413.46h15.32v2.19h-15.32zM586.89 415.65h2.19v2.19h-2.19zM593.45 415.65h4.38v2.19h-4.38zM610.95 415.65h2.19v2.19h-2.19zM617.52 415.65h4.38v2.19h-4.38zM626.27 415.65h2.19v2.19h-2.19zM630.65 415.65h2.19v2.19h-2.19zM637.21 415.65h4.38v2.19h-4.38zM648.15 415.65h4.38v2.19h-4.38zM584.70 417.83h2.19v2.19h-2.19zM595.64 417.83h2.19v2.19h-2.19zM621.89 417.83h6.56v2.19h-6.56zM632.83 417.83h10.94v2.19h-10.94zM645.96 417.83h6.56v2.19h-6.56zM584.70 420.02h6.56v2.19h-6.56zM595.64 420.02h10.94v2.19h-10.94zM610.95 420.02h8.75v2.19h-8.75zM621.89 420.02h2.19v2.19h-2.19zM628.46 420.02h4.38v2.19h-4.38zM637.21 420.02h2.19v2.19h-2.19zM643.77 420.02h6.56v2.19h-6.56zM654.71 420.02h2.19v2.19h-2.19zM589.08 422.21h2.19v2.19h-2.19zM595.64 422.21h8.75v2.19h-8.75zM610.95 422.21h8.75v2.19h-8.75zM628.46 422.21h2.19v2.19h-2.19zM632.83 422.21h2.19v2.19h-2.19zM637.21 422.21h13.13v2.19h-13.13zM652.52 422.21h4.38v2.19h-4.38zM602.20 424.40h2.19v2.19h-2.19zM606.58 424.40h2.19v2.19h-2.19zM613.14 424.40h2.19v2.19h-2.19zM617.52 424.40h10.94v2.19h-10.94zM630.65 424.40h2.19v2.19h-2.19zM635.02 424.40h4.38v2.19h-4.38zM645.96 424.40h6.56v2.19h-6.56zM654.71 424.40h2.19v2.19h-2.19zM584.70 426.58h15.32v2.19h-15.32zM602.20 426.58h2.19v2.19h-2.19zM606.58 426.58h6.56v2.19h-6.56zM615.33 426.58h4.38v2.19h-4.38zM621.89 426.58h2.19v2.19h-2.19zM630.65 426.58h2.19v2.19h-2.19zM635.02 426.58h4.38v2.19h-4.38zM641.58 426.58h2.19v2.19h-2.19zM645.96 426.58h4.38v2.19h-4.38zM654.71 426.58h2.19v2.19h-2.19zM584.70 428.77h2.19v2.19h-2.19zM597.83 428.77h2.19v2.19h-2.19zM608.77 428.77h10.94v2.19h-10.94zM630.65 428.77h8.75v2.19h-8.75zM645.96 428.77h2.19v2.19h-2.19zM652.52 428.77h2.19v2.19h-2.19zM584.70 430.96h2.19v2.19h-2.19zM589.08 430.96h6.56v2.19h-6.56zM597.83 430.96h2.19v2.19h-2.19zM606.58 430.96h2.19v2.19h-2.19zM613.14 430.96h6.56v2.19h-6.56zM624.08 430.96h2.19v2.19h-2.19zM628.46 430.96h6.56v2.19h-6.56zM637.21 430.96h13.13v2.19h-13.13zM584.70 433.15h2.19v2.19h-2.19zM589.08 433.15h6.56v2.19h-6.56zM597.83 433.15h2.19v2.19h-2.19zM602.20 433.15h2.19v2.19h-2.19zM606.58 433.15h6.56v2.19h-6.56zM619.71 433.15h2.19v2.19h-2.19zM626.27 433.15h2.19v2.19h-2.19zM632.83 433.15h10.94v2.19h-10.94zM645.96 433.15h2.19v2.19h-2.19zM650.34 433.15h2.19v2.19h-2.19zM654.71 433.15h2.19v2.19h-2.19zM584.70 435.34h2.19v2.19h-2.19zM589.08 435.34h6.56v2.19h-6.56zM597.83 435.34h2.19v2.19h-2.19zM610.95 435.34h2.19v2.19h-2.19zM619.71 435.34h4.38v2.19h-4.38zM632.83 435.34h2.19v2.19h-2.19zM637.21 435.34h4.38v2.19h-4.38zM652.52 435.34h2.19v2.19h-2.19zM584.70 437.52h2.19v2.19h-2.19zM597.83 437.52h2.19v2.19h-2.19zM602.20 437.52h10.94v2.19h-10.94zM621.89 437.52h2.19v2.19h-2.19zM626.27 437.52h2.19v2.19h-2.19zM635.02 437.52h2.19v2.19h-2.19zM639.40 437.52h2.19v2.19h-2.19zM645.96 437.52h10.94v2.19h-10.94zM584.70 439.71h15.32v2.19h-15.32zM602.20 439.71h4.38v2.19h-4.38zM610.95 439.71h6.56v2.19h-6.56zM621.89 439.71h2.19v2.19h-2.19zM626.27 439.71h6.56v2.19h-6.56zM637.21 439.71h2.19v2.19h-2.19zM641.58 439.71h2.19v2.19h-2.19zM645.96 439.71h4.38v2.19h-4.38zM652.52 439.71h2.19v2.19h-2.19z" fill="#111" filter="url(#b05)"/>
<rect x="611.8" y="397.6" width="17.8" height="17" rx="1.5" fill="#fff"/>
<rect x="612.8" y="406.8" width="15.8" height="6.6" rx=".8" fill="#1c5fd0"/>
<text x="620.7" y="404.6" font-size="4.6" font-weight="bold" fill="#2c6ad0" text-anchor="middle" textLength="12.5" lengthAdjust="spacingAndGlyphs">2B.CN</text>
<text x="620.7" y="412" font-size="4.2" fill="#fff" text-anchor="middle">托比网</text>
<g clip-path="url(#c9)">
<rect x="685.1" y="385.2" width="82.7" height="40.8" fill="url(#blu)"/>
<g filter="url(#b05)">
<rect x="687" y="387" width="11" height="12" fill="#1b3f9e" opacity=".55"/>
<ellipse cx="691.5" cy="390.5" rx="2.2" ry="2.8" fill="#2a2438"/><path d="M687.5 398 q4 -6 8 0z" fill="#20203a"/>
<rect x="688" y="396.5" width="9" height="2.6" fill="#c8b8c0" opacity=".8"/>
<text x="710" y="392.3" font-size="5.2" font-weight="bold" fill="#e8f0ff">2021</text>
<polygon points="722.5,388.5 751,389 750,392.4 721.8,392" fill="#f08a4a"/>
<text x="736.5" y="391.6" font-size="2.6" fill="#ffe9d8" text-anchor="middle">数字赋能 · 产业升级 · 跨境发展</text>
<text x="735" y="398.6" font-size="5.4" font-weight="bold" fill="#f4f8ff" text-anchor="middle" textLength="50" lengthAdjust="spacingAndGlyphs">中国江苏电子商务大会</text>
<text x="735.5" y="405.6" font-size="4.2" font-weight="bold" fill="#9fd0ff" text-anchor="middle" textLength="38" lengthAdjust="spacingAndGlyphs">暨中国产业互联网峰会</text>
<rect x="707" y="409.2" width="58" height="1.2" fill="#8fc4ff" opacity=".55"/>
<rect x="706" y="415" width="61" height="1" fill="#6fb0ff" opacity=".35"/>
<rect x="699" y="406.3" width="2.4" height="11" fill="#1a1a2c"/><circle cx="700.2" cy="405.2" r="1.1" fill="#3a2c30"/>
<rect x="702" y="409.8" width="5" height="2.4" fill="#d8cf6a"/><rect x="703" y="412" width="2.4" height="6" fill="#cfe0ff" opacity=".7"/>
</g>
<g filter="url(#b05)">
<path d="M685.1 426 L685.1 419 Q687.4 411.5 689.8 419.9 Q692.3 410.3 694.9 419.3 Q697.4 410.7 699.9 419.5 Q702.0 415.3 704.0 422.0 Q706.3 409.4 708.5 418.8 Q710.3 409.6 712.0 418.9 Q713.8 412.5 715.7 420.5 Q717.8 412.0 720.0 420.2 Q721.8 415.4 723.6 422.1 Q726.2 413.7 728.7 421.2 Q730.4 410.5 732.2 419.4 Q733.9 410.3 735.7 419.3 Q737.4 411.5 739.1 419.9 Q741.6 415.5 744.1 422.1 Q745.9 414.1 747.7 421.4 Q750.2 409.1 752.6 418.6 Q755.2 413.6 757.8 421.1 Q760.0 412.0 762.3 420.2 Q764.9 414.2 767.4 421.4 Q770.0 411.0 772.5 419.7 L767.8 426Z" fill="#171a3c"/>
<rect x="685.1" y="419.5" width="82.7" height="7" fill="#1b1626"/>
<circle cx="690" cy="423.2" r="1.5" fill="#5a4038" opacity=".75"/>
<circle cx="697" cy="423.2" r="1.5" fill="#5a4038" opacity=".75"/>
<circle cx="705" cy="423.2" r="1.5" fill="#5a4038" opacity=".75"/>
<circle cx="713" cy="423.2" r="1.5" fill="#5a4038" opacity=".75"/>
<circle cx="722" cy="423.2" r="1.5" fill="#5a4038" opacity=".75"/>
<circle cx="729" cy="423.2" r="1.5" fill="#5a4038" opacity=".75"/>
<circle cx="737" cy="423.2" r="1.5" fill="#5a4038" opacity=".75"/>
<circle cx="745" cy="423.2" r="1.5" fill="#5a4038" opacity=".75"/>
<circle cx="752" cy="423.2" r="1.5" fill="#5a4038" opacity=".75"/>
</g>
<text x="757.5" y="424.8" font-size="3.6" font-weight="bold" fill="#fff" text-anchor="middle" textLength="15" lengthAdjust="spacingAndGlyphs">江苏商报</text>
</g>
<rect x="787.5" y="360.9" width="89.9" height="89.7" fill="#eee4fa" stroke="#8b3dd6" stroke-width="2.6"/>
<g clip-path="url(#c10)">
<rect x="788.9" y="376" width="87.3" height="58.6" fill="#7a68aa"/>
<g filter="url(#b1)">
<polygon points="786,374 878,374 878,388 850,392 833,395 815,387 797,385 786,386" fill="#e9dccf"/>
<polygon points="822,376 878,376 878,386 850,390 834,393" fill="#f4dcb0"/>
<polygon points="838,379 878,378 878,384 848,388" fill="#fff4dc"/>
<polygon points="786,374 808,374 799,383 786,385" fill="#f6f0f8"/>
<polygon points="799,380 813,377 823,379 806,385" fill="#c9b8e0"/>
<path d="M826 380 L870 378 M830 384 L874 381" stroke="#e2b878" stroke-width=".9" opacity=".8"/>
<polygon points="786,385 797,384.5 812,388 812,411 786,413" fill="#b3a3d8"/>
<polygon points="786,395 812,396 812,404 786,405" fill="#9a8ad0"/>
<polygon points="812,388 833,395 833,410 812,411" fill="#5d4a94"/>
<polygon points="833,395 842,393 842,410 833,410" fill="#a08896"/>
<rect x="815" y="405" width="3" height="5" fill="#2c2450"/><rect x="826" y="405" width="2.6" height="5" fill="#2c2450"/>
<circle cx="791" cy="392" r="1.8" fill="#f2ecff"/>
<circle cx="795" cy="391.5" r="1.5" fill="#f2ecff"/>
<circle cx="799" cy="393" r="1.3" fill="#f2ecff"/>
<circle cx="791" cy="401" r="1.7" fill="#f2ecff"/>
<circle cx="795" cy="402.5" r="1.5" fill="#f2ecff"/>
<circle cx="803" cy="399" r="1.2" fill="#f2ecff"/>
<circle cx="808" cy="398" r="1.1" fill="#f2ecff"/>
<circle cx="820" cy="398.5" r="1" fill="#f2ecff"/>
<circle cx="829" cy="398.5" r="0.9" fill="#f2ecff"/>
<path d="M788 398.3 L832 399" stroke="#7686f4" stroke-width="1.1" opacity=".8"/>
<polygon points="842,394 878,388 878,412 842,410" fill="#2f7ae2"/>
<polygon points="858,397 878,394 878,403 858,404" fill="#56a0e6"/>
<path d="M858 405.2 L878 404.3" stroke="#5fd898" stroke-width="1.5"/>
<ellipse cx="847.5" cy="402" rx="2.8" ry="1.3" fill="#e4f2ff"/>
<rect x="845.2" y="408" width="1.6" height="3.6" fill="#f4f4ff"/>
<polygon points="786,411.5 810,409.5 842,410.5 878,411.5 878,436 786,436" fill="#5b4c80"/>
<circle cx="809.7" cy="423.2" r="2.0" fill="#43366a"/>
<circle cx="868.7" cy="421.7" r="1.9" fill="#6a5c94"/>
<circle cx="794.7" cy="411.8" r="1.1" fill="#1e1836"/>
<circle cx="811.6" cy="416.5" r="1.5" fill="#8878b0"/>
<circle cx="829.9" cy="429.5" r="2.5" fill="#1e1836"/>
<circle cx="823.6" cy="430.0" r="2.6" fill="#2c2348"/>
<circle cx="844.2" cy="430.2" r="2.6" fill="#6a5c94"/>
<circle cx="822.9" cy="411.8" r="1.1" fill="#241c3e"/>
<circle cx="802.9" cy="432.1" r="2.7" fill="#241c3e"/>
<circle cx="815.2" cy="412.2" r="1.2" fill="#43366a"/>
<circle cx="830.1" cy="427.0" r="2.3" fill="#1e1836"/>
<circle cx="851.1" cy="431.3" r="2.7" fill="#1e1836"/>
<circle cx="852.3" cy="423.9" r="2.1" fill="#2c2348"/>
<circle cx="865.5" cy="413.6" r="1.3" fill="#2c2348"/>
<circle cx="832.1" cy="417.0" r="1.5" fill="#8878b0"/>
<circle cx="826.9" cy="425.0" r="2.2" fill="#43366a"/>
<circle cx="825.6" cy="429.4" r="2.5" fill="#6a5c94"/>
<circle cx="819.5" cy="424.1" r="2.1" fill="#6a5c94"/>
<circle cx="809.2" cy="418.7" r="1.7" fill="#241c3e"/>
<circle cx="863.5" cy="432.8" r="2.8" fill="#8878b0"/>
<circle cx="849.5" cy="426.5" r="2.3" fill="#43366a"/>
<circle cx="872.9" cy="431.0" r="2.6" fill="#6a5c94"/>
<circle cx="798.1" cy="425.6" r="2.2" fill="#8878b0"/>
<circle cx="861.3" cy="423.8" r="2.1" fill="#43366a"/>
<circle cx="799.8" cy="421.9" r="1.9" fill="#8878b0"/>
<circle cx="875.1" cy="413.4" r="1.2" fill="#241c3e"/>
<circle cx="824.7" cy="414.7" r="1.4" fill="#43366a"/>
<circle cx="826.2" cy="420.4" r="1.8" fill="#241c3e"/>
<circle cx="792.8" cy="424.7" r="2.1" fill="#241c3e"/>
<circle cx="821.9" cy="424.1" r="2.1" fill="#6a5c94"/>
<circle cx="865.6" cy="432.6" r="2.8" fill="#6a5c94"/>
<circle cx="809.5" cy="412.3" r="1.2" fill="#241c3e"/>
<circle cx="795.7" cy="424.4" r="2.1" fill="#241c3e"/>
<circle cx="871.6" cy="432.4" r="2.8" fill="#43366a"/>
<circle cx="842.1" cy="414.9" r="1.4" fill="#241c3e"/>
<circle cx="874.3" cy="418.8" r="1.7" fill="#43366a"/>
<circle cx="872.4" cy="430.8" r="2.6" fill="#1e1836"/>
<circle cx="821.8" cy="430.2" r="2.6" fill="#1e1836"/>
<circle cx="845.0" cy="424.3" r="2.1" fill="#6a5c94"/>
<circle cx="797.9" cy="432.4" r="2.8" fill="#6a5c94"/>
<circle cx="812.6" cy="425.1" r="2.2" fill="#8878b0"/>
<circle cx="809.7" cy="418.0" r="1.6" fill="#43366a"/>
<circle cx="834.3" cy="423.3" r="2.0" fill="#241c3e"/>
<circle cx="857.6" cy="432.7" r="2.8" fill="#43366a"/>
<circle cx="790.7" cy="424.7" r="2.1" fill="#8878b0"/>
<circle cx="800.6" cy="425.1" r="2.2" fill="#43366a"/>
<circle cx="829.6" cy="426.1" r="2.3" fill="#43366a"/>
<circle cx="842.0" cy="417.5" r="1.6" fill="#1e1836"/>
<circle cx="790.9" cy="412.8" r="1.2" fill="#8878b0"/>
<circle cx="790.8" cy="419.4" r="1.7" fill="#8878b0"/>
<circle cx="828.7" cy="424.2" r="2.1" fill="#43366a"/>
<circle cx="804.4" cy="415.5" r="1.4" fill="#43366a"/>
<circle cx="862.4" cy="417.2" r="1.5" fill="#1e1836"/>
<circle cx="798.1" cy="429.0" r="2.5" fill="#6a5c94"/>
<circle cx="848.5" cy="414.3" r="1.3" fill="#6a5c94"/>
<circle cx="808.4" cy="428.8" r="2.5" fill="#2c2348"/>
<circle cx="817.5" cy="426.1" r="2.3" fill="#8878b0"/>
<circle cx="849.7" cy="413.7" r="1.3" fill="#43366a"/>
<circle cx="871.6" cy="426.0" r="2.2" fill="#2c2348"/>
<circle cx="827.1" cy="429.9" r="2.6" fill="#2c2348"/>
<circle cx="796.0" cy="427.5" r="2.4" fill="#2c2348"/>
<circle cx="866.0" cy="421.2" r="1.9" fill="#2c2348"/>
<circle cx="857.5" cy="412.2" r="1.2" fill="#2c2348"/>
<circle cx="816.4" cy="429.5" r="2.5" fill="#6a5c94"/>
<circle cx="805.0" cy="417.5" r="1.6" fill="#8878b0"/>
<circle cx="796.4" cy="424.8" r="2.2" fill="#6a5c94"/>
<circle cx="800.3" cy="417.8" r="1.6" fill="#43366a"/>
<circle cx="829.4" cy="425.1" r="2.2" fill="#43366a"/>
<circle cx="825.5" cy="420.3" r="1.8" fill="#1e1836"/>
<circle cx="802.6" cy="411.6" r="1.1" fill="#6a5c94"/>
<rect x="841" y="423" width="9" height="10" rx="1.5" fill="#e2def2" opacity=".9"/>
<rect x="852" y="419" width="8" height="9" rx="1.5" fill="#d6d6f0" opacity=".9"/>
<rect x="862" y="423" width="8" height="9" rx="1.5" fill="#c2c6e8" opacity=".9"/>
<rect x="836" y="415" width="5" height="5" rx="1.5" fill="#d2cce8" opacity=".9"/>
<rect x="797" y="427" width="7" height="7" rx="1.5" fill="#c8bee0" opacity=".9"/>
<rect x="789" y="425" width="5" height="8" rx="1.5" fill="#b4a8d2" opacity=".9"/>
<rect x="818" y="420" width="4" height="4" rx="1.5" fill="#a89ccc" opacity=".9"/>
<rect x="828" y="425" width="5" height="6" rx="1.5" fill="#d8d0ea" opacity=".9"/>
<rect x="870" y="418" width="5" height="6" rx="1.5" fill="#96acde" opacity=".9"/>
<rect x="806" y="416" width="4" height="4" rx="1.5" fill="#a99cc8" opacity=".9"/>
<rect x="849" y="413" width="4" height="4" rx="1.5" fill="#b8b4d8" opacity=".9"/>
<circle cx="822" cy="429.5" r="3.2" fill="#1e1736"/>
<circle cx="806" cy="424" r="2.6" fill="#1e1736"/>
<circle cx="846" cy="431.5" r="3" fill="#1e1736"/>
<circle cx="870" cy="430" r="3" fill="#1e1736"/>
<circle cx="832" cy="421" r="2.2" fill="#1e1736"/>
<circle cx="812" cy="431" r="2.8" fill="#1e1736"/>
<circle cx="858" cy="416" r="2" fill="#1e1736"/>
<circle cx="795" cy="421" r="2.4" fill="#1e1736"/>
<circle cx="840" cy="419.5" r="2" fill="#1e1736"/>
</g>
<text x="865.5" y="432.3" font-size="3.8" font-weight="bold" fill="#f4f0ff" text-anchor="middle" textLength="16" lengthAdjust="spacingAndGlyphs">江苏商报</text>
<rect x="788.9" y="376" width="87.3" height="58.6" fill="#8b3dd6" opacity=".12"/>
</g>
</svg>
































  <!-- captions row 1 -->
  <div class="cap" style="left:204.6px;top:310.4px">download.jpg</div>
  <div class="cap" style="left:310.3px;top:310.4px">1</div>
  <div class="cap" style="left:416px;top:310.4px;letter-spacing:.12px">166607788544...</div>
  <div class="cap" style="left:521.8px;top:310.4px">1</div>
  <div class="cap" style="left:627.5px;top:310.4px">1</div>
  <!-- captions row 2 -->
  <div class="cap" style="left:204.6px;top:448.4px">1</div>
  <div class="cap" style="left:310.3px;top:448.4px">1</div>
  <div class="cap" style="left:416px;top:448.4px">1</div>
  <div class="cap" style="left:521.8px;top:448.4px">1</div>
  <div class="cap" style="left:627.5px;top:448.4px">1</div>

  <!-- pagination -->
  <div class="pg" style="left:319.65px">共 12055 条</div>
  <svg class="abs" style="left:393.25px;top:508.00px" width="8" height="9" viewBox="0 0 8 9"><path d="M5.6 1 L1.8 4.5 L5.6 8" stroke="#c0c4cc" stroke-width="1" fill="none"/></svg>
  <div class="pn" style="left:409.25px;color:#7728cc">1</div>
  <div class="pn" style="left:427.55px">2</div>
  <div class="pn" style="left:445.95px">3</div>
  <div class="pn" style="left:464.05px">4</div>
  <div class="pn" style="left:482.55px;letter-spacing:1px;font-size:6.5px;text-indent:1px">•••</div>
  <div class="pn" style="left:497.85px;width:40px">1206</div>
  <svg class="abs" style="left:543.25px;top:508.00px" width="8" height="9" viewBox="0 0 8 9"><path d="M2.2 1 L6 4.5 L2.2 8" stroke="#303133" stroke-width="1" fill="none"/></svg>
  <div class="pg" style="left:577.25px">前往</div>
  <div class="abs" style="left:602.25px;top:502.80px;width:37.5px;height:18.2px;border:1px solid #dcdfe6;border-radius:3px;text-align:center;line-height:17.4px;font-size:11.5px;color:#606266">1</div>
  <div class="pg" style="left:643.85px">页</div>

  <!-- footer buttons -->
  <div class="abs" style="left:298.75px;top:548.10px;width:69.8px;height:33px;background:#7b27c6;border-radius:3.5px;color:#fff;font-weight:500;font-size:11.7px;text-align:center;line-height:34.5px">下一步</div>
  <div class="abs" style="left:377.25px;top:548.10px;width:139.8px;height:33px;background:#f2e9fb;border:1px solid #d9c3f1;border-radius:3.5px;color:#7b27c6;font-weight:500;font-size:11.7px;text-align:center;line-height:32.6px;white-space:nowrap">直接使用（不裁剪）</div>
  <div class="abs" style="left:370.45px;top:533.60px;width:158.4px;height:53.4px;border:2.3px solid #ff2a0c;border-radius:5px"></div>
</div>
</div>
</body>
</html>
